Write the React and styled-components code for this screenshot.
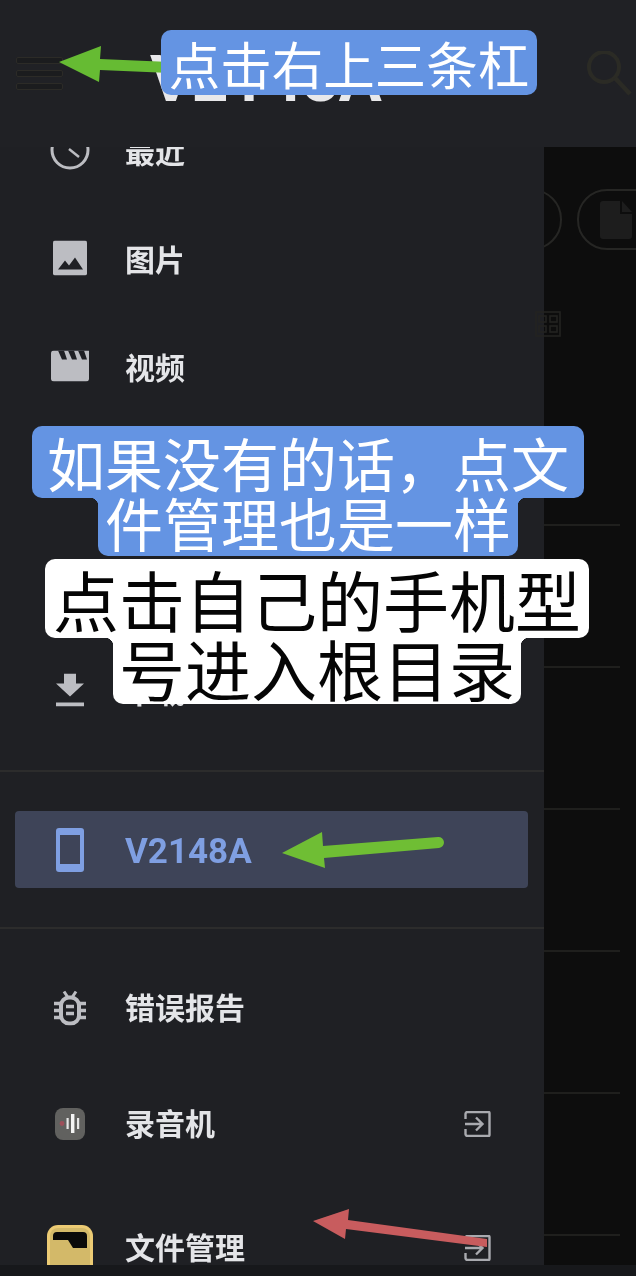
import React from "react";
import styled, { createGlobalStyle } from "styled-components";

const GlobalStyle = createGlobalStyle`
  html, body { margin: 0; padding: 0; background: #0d0d0d; }
  * { box-sizing: border-box; }
  body { font-family: "Noto Sans CJK SC", "Noto Sans", sans-serif; }
`;

const Screen = styled.div`
  position: relative;
  width: 636px;
  height: 1276px;
  overflow: hidden;
  display: flex;
  flex-direction: column;
  filter: blur(0.4px);
`;

const Main = styled.div`
  flex: 1;
  min-height: 0;
  display: flex;
`;

const Drawer = styled.aside`
  width: 544px;
  flex: none;
  display: flex;
  flex-direction: column;
  background: #1f2024;
`;

const TopBar = styled.header`
  height: 147px;
  flex: none;
  display: flex;
  align-items: center;
  padding: 0 0 0 16px;
  gap: 87px;
  background: #202125;
  overflow: hidden;
`;

const Burger = styled.div`
  width: 47px;
  display: flex;
  flex-direction: column;
  gap: 6px;
  span {
    height: 7px;
    background: #1b1c1e;
    border: 1px solid #2c2b27;
    border-radius: 2px;
  }
`;

const Title = styled.h1`
  margin: 12px 0 0;
  font-family: Roboto, "Liberation Sans", sans-serif;
  font-weight: 700;
  font-size: 64px;
  line-height: 1;
  color: #e8e8ea;
`;

const MenuClip = styled.div`
  flex: 1;
  min-height: 0;
  overflow: hidden;
`;

const MenuList = styled.nav`
  margin-top: -51px;
`;

const Row = styled.div`
  height: ${(p) => p.$h || 108}px;
  display: flex;
  align-items: center;
  padding: 0 53px 0 125px;
  position: relative;
`;

const IconSlot = styled.div`
  position: absolute;
  left: 70px;
  top: calc(50% + ${(p) => p.$nudge || 0}px);
  transform: translate(-50%, -50%);
  display: flex;
`;

const Label = styled.span`
  flex: 1;
  font-size: 30px;
  font-weight: 700;
  line-height: 1;
  color: #e4e5e8;
`;

const ExitWrap = styled.div`
  display: flex;
  margin-top: 3px;
`;

const Divider = styled.hr`
  margin: ${(p) => p.$top || 0}px 0 0;
  border: 0;
  height: 2px;
  background: #2c2c2c;
`;

const DeviceWrap = styled.div`
  padding: 39px 16px 39px 15px;
`;

const DeviceCard = styled.div`
  height: 77px;
  background: #3e4458;
  border-radius: 4px;
  display: flex;
  align-items: center;
  position: relative;
  padding: 4px 0 0 110px;
`;

const DeviceName = styled.span`
  font-family: Roboto, "Liberation Sans", sans-serif;
  font-weight: 700;
  font-size: 35px;
  line-height: 1;
  color: #7f9fe2;
`;

const DeviceIcon = styled.div`
  position: absolute;
  left: 41px;
  top: 17px;
  display: flex;
`;

const ToolsList = styled.div`
  padding-top: 19px;
`;

const RightPane = styled.section`
  flex: 1;
  min-width: 0;
  display: flex;
  flex-direction: column;
  background: #0d0d0d;
`;

const RightTop = styled.div`
  height: 147px;
  flex: none;
  background: #202125;
  padding: 51px 0 0 42px;
`;

const ChipRow = styled.div`
  display: flex;
  gap: 15px;
  margin: 42px 0 0 -42px;
  height: 61px;
`;

const Chip = styled.div`
  flex: none;
  width: ${(p) => p.$w}px;
  height: 61px;
  border: 2px solid #262624;
  border-radius: 30px;
  display: flex;
  align-items: center;
  padding-left: 21px;
`;

const ChipsClip = styled.div`
  overflow: hidden;
`;

const GridIconWrap = styled.div`
  margin: 61px 0 0 -9px;
  display: flex;
`;

const FileRow = styled.div`
  width: 76px;
  height: 142px;
  flex: none;
  border-bottom: 2px solid #1f1f1d;
`;

const FileRows = styled.div`
  margin-top: 47px;
`;

const BottomBar = styled.div`
  height: 11px;
  flex: none;
  background: #17181b;
`;

const Caption = styled.div`
  position: absolute;
  top: ${(p) => p.$top}px;
  left: ${(p) => p.$left}px;
  width: ${(p) => p.$w}px;
  display: flex;
  flex-direction: column;
  align-items: center;
`;

const CaptionLine = styled.div`
  position: relative;
  height: ${(p) => p.$h}px;
  width: ${(p) => p.$w}px;
  background: ${(p) => p.$bg};
  color: ${(p) => p.$fg};
  border-radius: ${(p) => (p.$second ? "0 0 10px 10px" : "10px")};
  display: flex;
  align-items: center;
  justify-content: center;
  font-size: ${(p) => p.$size}px;
  font-weight: 400;
  line-height: ${(p) => p.$h}px;
  white-space: nowrap;
  padding-bottom: ${(p) => p.$pb || 0}px;
  ${(p) =>
    p.$second &&
    `
    &::before, &::after {
      content: "";
      position: absolute;
      top: 0;
      width: 8px;
      height: 8px;
    }
    &::before {
      left: -8px;
      background: radial-gradient(circle at 0 100%, transparent 8px, ${p.$bg} 8.5px);
    }
    &::after {
      right: -8px;
      background: radial-gradient(circle at 100% 100%, transparent 8px, ${p.$bg} 8.5px);
    }
  `}
`;

const Overlay = styled.svg`
  position: absolute;
  left: 0;
  top: 0;
  pointer-events: none;
`;

const ClockIcon = () => (
  <svg width="40" height="40" viewBox="0 0 40 40" fill="none" stroke="#bcbdc2" strokeWidth="3">
    <circle cx="20" cy="20" r="18" />
    <path d="M19 19l10 8" strokeWidth="2.5" />
  </svg>
);

const PictureIcon = () => (
  <svg width="34" height="35" viewBox="0 0 34 35">
    <rect width="34" height="35" rx="2" fill="#bcbdc2" />
    <path d="M5 29l7-9 4 5 6-8 8 12z" fill="#1f2024" />
  </svg>
);

const VideoIcon = () => (
  <svg width="38" height="31" viewBox="0 0 38 31">
    <path d="M3 0h35v28a3 3 0 0 1-3 3H3a3 3 0 0 1-3-3V3a3 3 0 0 1 3-3z" fill="#bcbdc2" />
    <path d="M7 0h6l3 9h-5zM17 0h6l3 9h-5zM27 0h6l3 9h-5z" fill="#1f2024" />
  </svg>
);

const DownloadIcon = () => (
  <svg width="28" height="33" viewBox="0 0 28 33" fill="#bcbdc2">
    <path d="M8 0h12v10h8L14 23 0 10h8z" />
    <rect y="29" width="28" height="4" />
  </svg>
);

const PhoneIcon = () => (
  <svg width="28" height="44" viewBox="0 0 28 44">
    <rect width="28" height="44" rx="3" fill="#7f9fe2" />
    <rect x="4" y="7" width="20" height="29" fill="#3e4458" />
  </svg>
);

const BugIcon = () => (
  <svg width="32" height="35" viewBox="0 0 32 35" fill="none" stroke="#bcbdc2" strokeWidth="4">
    <rect x="7" y="7" width="18" height="26" rx="8" />
    <path d="M10 1l4 6M22 1l-4 6" strokeWidth="3" />
    <path d="M0 13h6M26 13h6M0 20h6M26 20h6M0 27h6M26 27h6" strokeWidth="3.5" />
    <path d="M12 16h8M12 23h8" strokeWidth="3.5" />
  </svg>
);

const RecorderIcon = () => (
  <svg width="30" height="32" viewBox="0 0 30 32">
    <rect width="30" height="32" rx="8" fill="#61615f" />
    <circle cx="7" cy="15.5" r="2.4" fill="#9d4f5a" />
    <rect x="11.5" y="10" width="2.2" height="11" fill="#e6e6e6" />
    <rect x="16" y="6" width="3.4" height="19" fill="#f4f4f4" />
    <rect x="22" y="10" width="2.2" height="11" fill="#e6e6e6" />
  </svg>
);

const FilesIcon = () => (
  <svg width="46" height="46" viewBox="0 0 46 46">
    <path d="M11 0h24a11 11 0 0 1 11 11v35H0V11A11 11 0 0 1 11 0z" fill="#eccb74" />
    <path d="M11 3h24a8 8 0 0 1 8 8v35H3V11a8 8 0 0 1 8-8z" fill="#d3b969" />
    <path d="M6 15v-4a4 4 0 0 1 4-4h26a4 4 0 0 1 4 4v12H26l-5-8z" fill="#0a0a0a" />
  </svg>
);

const ExitIcon = () => (
  <svg width="27" height="26" viewBox="0 0 27 26" fill="none" stroke="#a9aaaf" strokeWidth="2.4">
    <path d="M1.5 8V3a2 2 0 0 1 2-2h21a1 1 0 0 1 1 1v22a1 1 0 0 1-1 1h-21a2 2 0 0 1-2-2v-5" />
    <path d="M1 13h17M12 6.5l6.5 6.5-6.5 6.5" />
  </svg>
);

const SearchIcon = () => (
  <svg width="46" height="45" viewBox="0 0 46 45" fill="none" stroke="#2b2b25">
    <circle cx="18" cy="16" r="15" strokeWidth="4" />
    <path d="M29 27l15 16" strokeWidth="4.5" />
  </svg>
);

const FileIcon = () => (
  <svg width="32" height="38" viewBox="0 0 32 38" fill="#1d1d1d">
    <path d="M3 0h17v13h12v22a3 3 0 0 1-3 3H3a3 3 0 0 1-3-3V3a3 3 0 0 1 3-3z" />
    <path d="M22 0l10 11H22z" />
  </svg>
);

const GridIcon = () => (
  <svg width="26" height="26" viewBox="0 0 26 26" fill="none" stroke="#232321" strokeWidth="1.6">
    <rect x="1" y="1" width="24" height="24" />
    <rect x="4" y="5" width="7" height="6" />
    <rect x="15" y="5" width="7" height="6" />
    <rect x="4" y="15" width="7" height="6" />
    <rect x="15" y="15" width="7" height="6" />
  </svg>
);

// the two empty rows sit under the captions
const media = [
  { id: "recent", label: "最近", icon: <ClockIcon /> },
  { id: "images", label: "图片", icon: <PictureIcon /> },
  { id: "video", label: "视频", icon: <VideoIcon /> },
  { id: "hidden1" },
  { id: "hidden2" },
  { id: "downloads", label: "下载", icon: <DownloadIcon /> },
];

const tools = [
  { label: "错误报告", icon: <BugIcon />, h: 116 },
  { label: "录音机", icon: <RecorderIcon />, h: 116, exit: true },
  { label: "文件管理", icon: <FilesIcon />, h: 132, exit: true },
];

const BLUE = { $bg: "#6494e3", $fg: "#ffffff" };
const WHITE = { $bg: "#ffffff", $fg: "#050505" };

export default function App() {
  return (
    <>
      <GlobalStyle />
      <Screen>
        <Main>
          <Drawer>
            <TopBar>
              <Burger>
                <span />
                <span />
                <span />
              </Burger>
              <Title>V2148A</Title>
            </TopBar>
            <MenuClip>
              <MenuList>
                {media.map((m) => (
                  <Row key={m.id}>
                    <IconSlot>{m.icon}</IconSlot>
                    <Label>{m.label}</Label>
                  </Row>
                ))}
                <Divider $top={26} />
                <DeviceWrap>
                  <DeviceCard>
                    <DeviceIcon>
                      <PhoneIcon />
                    </DeviceIcon>
                    <DeviceName>V2148A</DeviceName>
                  </DeviceCard>
                </DeviceWrap>
                <Divider />
                <ToolsList>
                  {tools.map((t) => (
                    <Row key={t.label} $h={t.h}>
                      <IconSlot $nudge={2}>{t.icon}</IconSlot>
                      <Label>{t.label}</Label>
                      {t.exit && (
                        <ExitWrap>
                          <ExitIcon />
                        </ExitWrap>
                      )}
                    </Row>
                  ))}
                </ToolsList>
              </MenuList>
            </MenuClip>
          </Drawer>
          <RightPane>
            <RightTop>
              <SearchIcon />
            </RightTop>
            <ChipsClip>
              <ChipRow>
                <Chip $w={60} />
                <Chip $w={100}>
                  <FileIcon />
                </Chip>
              </ChipRow>
            </ChipsClip>
            <GridIconWrap>
              <GridIcon />
            </GridIconWrap>
            <FileRows>
              {[0, 1, 2, 3, 4, 5].map((i) => (
                <FileRow key={i} />
              ))}
            </FileRows>
          </RightPane>
        </Main>
        <BottomBar />

        <Overlay width="636" height="1276" viewBox="0 0 636 1276">
          <path d="M59 62L101 46L100 59L170 62L170 73L100 70L99 82Z" fill="#66bb33" />
          <path d="M282 853L322 832L323 846L438 837a5 5 0 0 1 1 11L324 858L325 868Z" fill="#6fbe34" />
          <path d="M313 1221L349 1209L348 1220L487 1239L487 1247L346 1229L345 1239Z" fill="#c85c5e" />
        </Overlay>

        <Caption $top={30} $left={161} $w={376}>
          <CaptionLine {...BLUE} $w={376} $h={65} $size={51.5}>点击右上三条杠</CaptionLine>
        </Caption>
        <Caption $top={426} $left={32} $w={552}>
          <CaptionLine {...BLUE} $w={552} $h={72} $size={58}>如果没有的话，点文</CaptionLine>
          <CaptionLine {...BLUE} $second $w={420} $h={58} $size={58} $pb={10}>件管理也是一样</CaptionLine>
        </Caption>
        <Caption $top={559} $left={45} $w={544}>
          <CaptionLine {...WHITE} $w={544} $h={79} $size={66}>点击自己的手机型</CaptionLine>
          <CaptionLine {...WHITE} $second $w={408} $h={66} $size={66} $pb={8}>号进入根目录</CaptionLine>
        </Caption>
      </Screen>
    </>
  );
}
